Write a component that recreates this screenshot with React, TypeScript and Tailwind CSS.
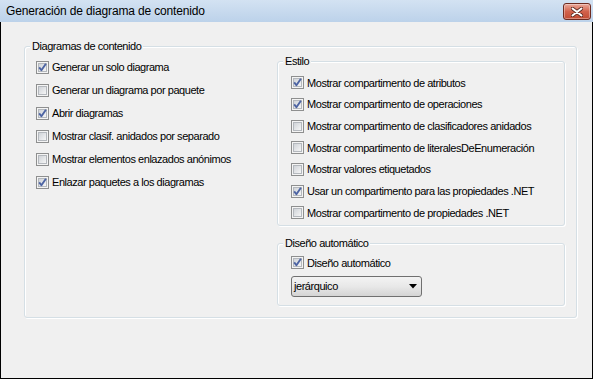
import React from 'react'

const font = "font-['Liberation_Sans',Arial,sans-serif]"

const contentOptions = [
  { label: 'Generar un solo diagrama', checked: true },
  { label: 'Generar un diagrama por paquete', checked: false },
  { label: 'Abrir diagramas', checked: true },
  { label: 'Mostrar clasif. anidados por separado', checked: false },
  { label: 'Mostrar elementos enlazados anónimos', checked: false },
  { label: 'Enlazar paquetes a los diagramas', checked: true },
]

const styleOptions = [
  { label: 'Mostrar compartimento de atributos', checked: true },
  { label: 'Mostrar compartimento de operaciones', checked: true },
  { label: 'Mostrar compartimento de clasificadores anidados', checked: false },
  { label: 'Mostrar compartimento de literalesDeEnumeración', checked: false },
  { label: 'Mostrar valores etiquetados', checked: false },
  { label: 'Usar un compartimento para las propiedades .NET', checked: true },
  { label: 'Mostrar compartimento de propiedades .NET', checked: false },
]

function CheckBox({ checked }: { checked: boolean }) {
  return (
    <svg width="13" height="13" viewBox="0 0 13 13" className="shrink-0">
      <defs>
        <linearGradient id="cbfill" x1="0" y1="0" x2="1" y2="1">
          <stop offset="0" stopColor="#cdd1d6" />
          <stop offset="1" stopColor="#f8f8f8" />
        </linearGradient>
      </defs>
      <rect x="0.5" y="0.5" width="12" height="12" fill="#f4f4f4" stroke="#8e8f8f" />
      <rect x="2.5" y="2.5" width="8" height="8" fill="url(#cbfill)" stroke="#b4b8bd" />
      {checked && (
        <path d="M3.2 6.4 L5.4 9.3 L9.9 2.8" stroke="#4d64a3" strokeWidth="1.9" fill="none" strokeLinejoin="round" />
      )}
    </svg>
  )
}

function Option({ label, checked, rowClass }: { label: string; checked: boolean; rowClass: string }) {
  return (
    <div className={`flex items-center gap-[3px] ${rowClass}`}>
      <CheckBox checked={checked} />
      <span className="whitespace-nowrap">{label}</span>
    </div>
  )
}

function GroupBox({ title, className, children }: { title: string; className: string; children: React.ReactNode }) {
  return (
    <div className={`relative border border-[#d5dfe5] rounded-[3px] shadow-[1px_1px_0_#ffffff,inset_1px_1px_0_#ffffff] ${className}`}>
      <span className="absolute top-[-8px] left-[5px] px-[2px] bg-[#f0f0f0] leading-[14px] whitespace-nowrap">{title}</span>
      {children}
    </div>
  )
}

export default function App() {
  return (
    <div className={`w-[593px] h-[379px] flex flex-col bg-[#f0f0f0] text-[11px] tracking-[-0.45px] text-black ${font}`}>
      <div className="h-[22px] shrink-0 flex items-start justify-between bg-gradient-to-b from-[#d3e2f2] to-[#bcd2ea]">
        <span className="pl-[6px] pt-[4px] text-[12px] tracking-[-0.15px] leading-[14px]">Generación de diagrama de contenido</span>
        <div className="mt-[3px] mr-[2px] w-[28px] h-[17px] rounded-[3px] border border-[#6e2b20] bg-gradient-to-b from-[#e9a99b] via-[#d2624c] to-[#c24b33] flex items-center justify-center shadow-[inset_0_0_0_1px_rgba(255,255,255,0.35)]">
          <svg width="12" height="10" viewBox="0 0 12 10">
            <path d="M1.5 1.5 L10.5 8.5 M10.5 1.5 L1.5 8.5" stroke="#5a2a22" strokeWidth="3.6" strokeLinecap="round" />
            <path d="M1.5 1.5 L10.5 8.5 M10.5 1.5 L1.5 8.5" stroke="#ffffff" strokeWidth="2" strokeLinecap="round" />
          </svg>
        </div>
      </div>

      <div className="flex-1 border-l border-r border-b border-black pl-[23px] pt-[24px]">
        <GroupBox title="Diagramas de contenido" className="w-[553px] h-[272px] flex pl-[11px] pt-[9px]">
          <div className="w-[241px] flex flex-col">
            {contentOptions.map((o) => (
              <Option key={o.label} label={o.label} checked={o.checked} rowClass="h-[23px]" />
            ))}
          </div>

          <div className="flex flex-col mt-[5px]">
            <GroupBox title="Estilo" className="w-[288px] h-[165px] pl-[13px] pt-[10px]">
              {styleOptions.map((o) => (
                <Option key={o.label} label={o.label} checked={o.checked} rowClass="h-[21.67px]" />
              ))}
            </GroupBox>

            <GroupBox title="Diseño automático" className="mt-[17px] w-[288px] h-[63px] pl-[13px] pt-[8px]">
              <Option label="Diseño automático" checked={true} rowClass="h-[21.67px]" />
              <div className="mt-[2px] w-[131px] h-[21px] rounded-[3px] border border-[#707070] bg-gradient-to-b from-[#f3f3f3] via-[#e8e8e8] to-[#d4d4d4] flex items-center justify-between pl-[2px] pr-[4px]">
                <span className="leading-[14px]">jerárquico</span>
                <svg width="8" height="5" viewBox="0 0 8 5">
                  <path d="M0 0 H8 L4 4.5 Z" fill="#000000" />
                </svg>
              </div>
            </GroupBox>
          </div>
        </GroupBox>
      </div>
    </div>
  )
}
